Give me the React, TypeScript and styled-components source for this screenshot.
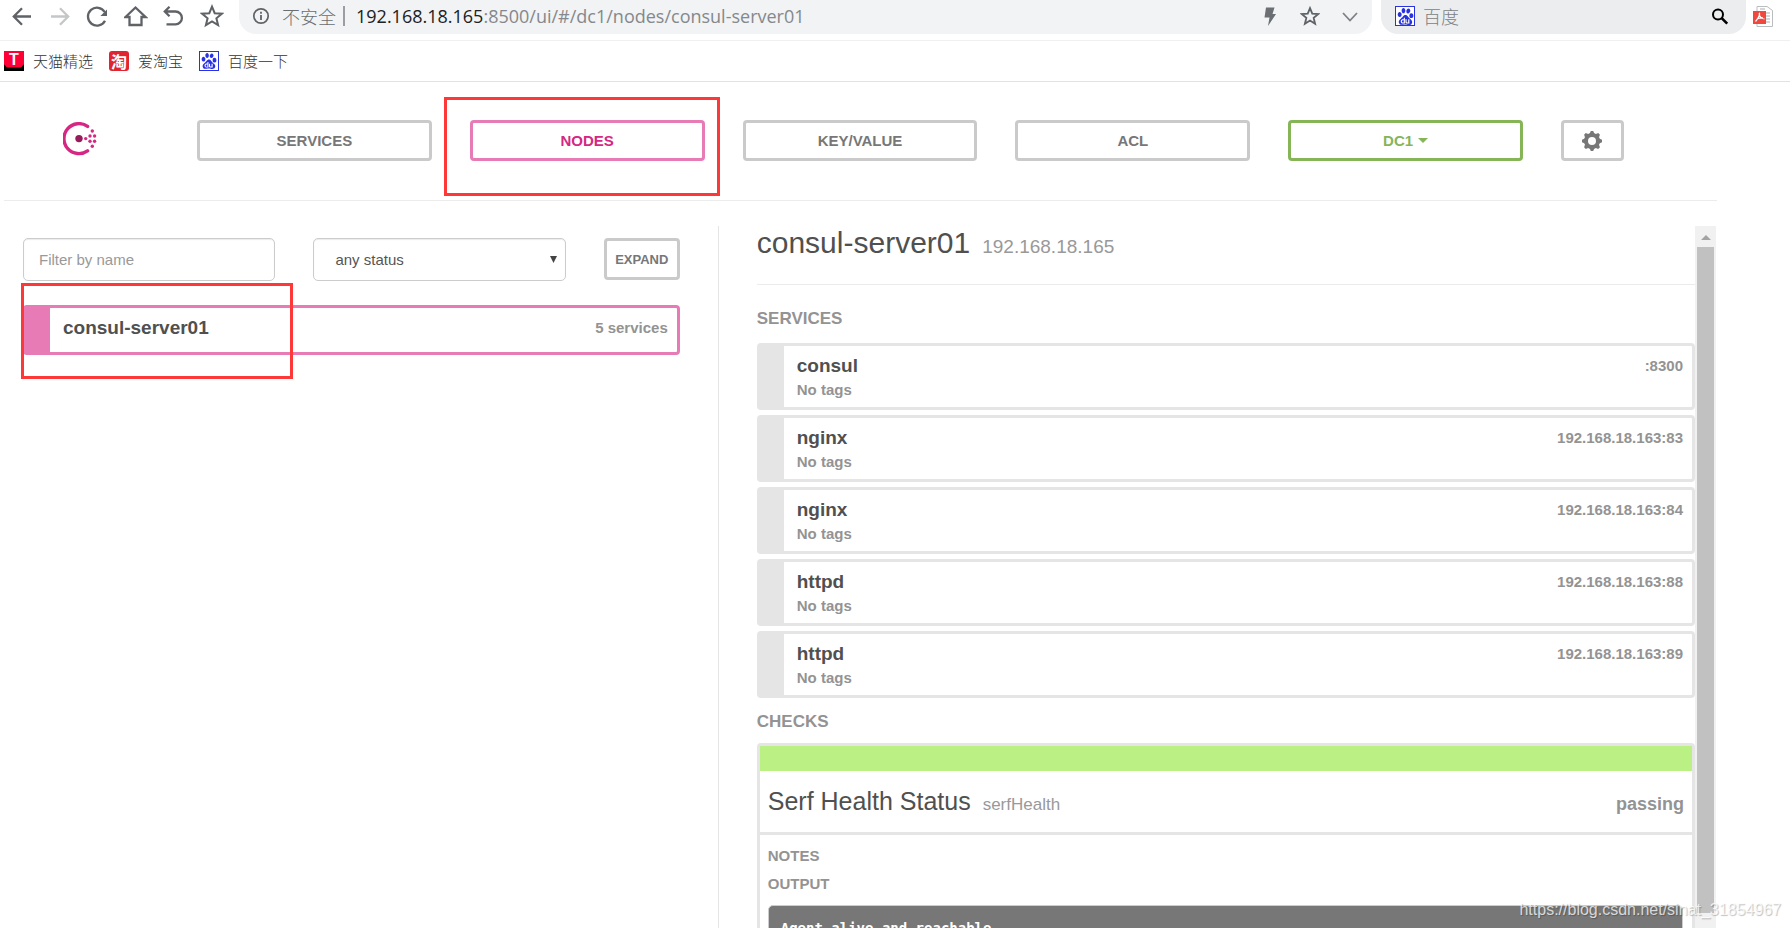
import React from "react";
import styled, { createGlobalStyle, css } from "styled-components";
import { SiBaidu } from "react-icons/si";

const GlobalStyle = createGlobalStyle`
  *, *::before, *::after { box-sizing: border-box; }
  body {
    margin: 0;
    background: #fff;
    color: #555;
    font-family: "Liberation Sans", Arial, sans-serif;
    font-size: 15px;
  }
  h1, h2, h3, h4, p, pre, ul { margin: 0; padding: 0; }
  button, input, select { font-family: inherit; }
`;

const Page = styled.div`
  position: relative;
  display: flex;
  flex-direction: column;
  height: 100vh;
  min-width: 1100px;
  overflow: hidden;
`;

/* ---------- browser chrome ---------- */

const Toolbar = styled.header`
  display: flex;
  align-items: flex-start;
  height: 41px;
  flex: none;
  padding: 0 14px 0 10px;
  border-bottom: 1px solid #f0f0f0;
`;

const ToolButtons = styled.div`
  display: flex;
  gap: 14px;
  padding-top: 4px;
  margin-right: 15px;
`;

const IconButton = styled.button`
  display: flex;
  align-items: center;
  justify-content: center;
  width: 24px;
  height: 24px;
  padding: 0;
  border: 0;
  background: none;
  color: #5f6266;
`;

const PdfLink = styled.a`
  display: flex;
  padding-top: 4px;
  width: 24px;
`;

const Pill = styled.div<{ $grow?: boolean }>`
  display: flex;
  align-items: center;
  height: 34px;
  border-radius: 0 0 17px 17px;
  background: ${(p) => (p.$grow ? "#f1f3f4" : "#ecedef")};
  ${(p) =>
    p.$grow
      ? css`
          flex: 1;
          padding: 0 10px 2px 12px;
          margin-right: 9px;
        `
      : css`
          width: 365px;
          padding: 0 14px 2px;
          margin-right: 6px;
        `}
`;

const PillActions = styled.div`
  display: flex;
  gap: 16px;
  margin-left: auto;
`;

const Insecure = styled.span`
  margin-left: 11px;
  padding-right: 7px;
  border-right: 2px solid #9a9da1;
  color: #6a6d71;
  font: 300 18px/20px "Noto Sans CJK SC", sans-serif;
`;

const Url = styled.span`
  margin-left: 11px;
  color: #85888c;
  font: 18px/24px "Open Sans", sans-serif;
  b { font-weight: 400; color: #202124; }
`;

const Engine = styled.span`
  margin-left: 8px;
  color: #7c7f83;
  font: 300 18px/24px "Noto Sans CJK SC", sans-serif;
`;

const Bookmarks = styled.nav`
  display: flex;
  align-items: center;
  gap: 16px;
  height: 41px;
  flex: none;
  padding: 0 4px;
  border-bottom: 1px solid #e2e2e2;
`;

const Bookmark = styled.a`
  display: flex;
  align-items: center;
  gap: 9px;
  color: #333;
  font: 300 15px/20px "Noto Sans CJK SC", sans-serif;
  text-decoration: none;
`;

const PawBox = styled.span`
  display: flex;
  align-items: center;
  justify-content: center;
  width: 20px;
  height: 20px;
  border: 1px solid #2932e1;
  background: #fff;
  color: #2932e1;
`;

const TaoBox = styled.span`
  display: flex;
  align-items: center;
  justify-content: center;
  width: 20px;
  height: 20px;
  border-radius: 3px;
  background: #e02430;
  color: #fff;
  font-size: 16px;
  font-weight: 700;
`;

/* ---------- consul page ---------- */

const Content = styled.div`
  display: flex;
  flex-direction: column;
  flex: 1;
  min-height: 0;
  padding: 0 73px 0 4px;
`;

const Nav = styled.nav`
  display: flex;
  gap: 38px;
  flex: none;
  padding: 38px 93px 39px 59px;
  border-bottom: 1px solid #ececec;
`;

const Logo = styled.a`
  display: flex;
  width: 96px;
  height: 34px;
  padding-top: 2px;
`;

const NavSlot = styled.div`
  position: relative;
  display: flex;
  flex: 1;
`;

type Tone = "plain" | "pink" | "green";
const tones: Record<Tone, { line: string; text: string }> = {
  plain: { line: "#cacaca", text: "#777" },
  pink: { line: "#e77bb5", text: "#d62783" },
  green: { line: "#86b558", text: "#86b558" },
};

const OutlineButton = styled.button<{ $tone?: Tone; $compact?: boolean }>`
  display: flex;
  align-items: center;
  justify-content: center;
  gap: 5px;
  flex: 1;
  height: 41px;
  padding: 0;
  border: 3px solid ${(p) => tones[p.$tone ?? "plain"].line};
  border-radius: 4px;
  background: #fff;
  color: ${(p) => tones[p.$tone ?? "plain"].text};
  font-size: 15px;
  font-weight: 700;
  ${(p) =>
    p.$compact &&
    css`
      height: 42px;
      font-size: 13px;
    `}
`;

const GearButton = styled(OutlineButton)`
  flex: none;
  width: 63px;
`;

const Highlight = styled.span<{ $around: "tab" | "node" }>`
  position: absolute;
  border: 3px solid #fd3838;
  pointer-events: none;
  ${(p) =>
    p.$around === "tab"
      ? css`inset: -23px -15px -35px -26px;`
      : css`
          top: -25px;
          left: -29px;
          width: 272px;
          height: 96px;
        `}
`;

const Columns = styled.main`
  display: grid;
  grid-template-columns: 5fr 7fr;
  flex: 1;
  min-height: 0;
  padding-top: 25px;
`;

const ListPane = styled.section`
  padding: 12px 38px 0 19px;
`;

const Filters = styled.form`
  display: grid;
  grid-template-columns: 1fr 1fr 76px;
  gap: 38px;
  margin-bottom: 24px;
`;

const field = css`
  width: 100%;
  height: 43px;
  border: 1px solid #ccc;
  border-radius: 5px;
  background: #fff;
  box-shadow: inset 0 1px 1px rgba(0, 0, 0, 0.08);
  color: #555;
  font-size: 15px;
`;

const NameInput = styled.input`
  ${field}
  min-width: 0;
  padding: 0 15px;
  &::placeholder { color: #999; opacity: 1; }
`;

const SelectWrap = styled.div`
  position: relative;
  svg { position: absolute; top: 18px; right: 9px; pointer-events: none; }
`;

const StatusSelect = styled.select`
  ${field}
  appearance: none;
  padding: 0 21px;
`;

const Row = styled.a<{ $active?: boolean }>`
  position: relative;
  display: flex;
  justify-content: space-between;
  min-height: ${(p) => (p.$active ? 50 : 67)}px;
  padding: 8px 9px 0 13px;
  border: 3px solid ${(p) => (p.$active ? "#e77bb5" : "#e5e5e5")};
  border-left-width: 27px;
  border-radius: 4px;
  color: #939393;
  font-weight: 700;
  line-height: 24px;
  text-decoration: none;
`;

const RowName = styled.h3`
  color: #505050;
  font-size: 19px;
  line-height: 24px;
`;

const DetailPane = styled.section`
  display: flex;
  min-width: 0;
  min-height: 0;
  padding-right: 1px;
  border-left: 1px solid #e5e5e5;
  overflow: hidden;
`;

const Detail = styled.div`
  flex: 1;
  min-width: 0;
  padding-left: 38px;
`;

const Title = styled.h1`
  padding-bottom: 24px;
  border-bottom: 1px solid #ebebeb;
  color: #505050;
  font-size: 30px;
  font-weight: 400;
  line-height: 34px;
`;

const Sub = styled.small<{ $size: number }>`
  margin-left: 12px;
  color: #999;
  font-size: ${(p) => p.$size}px;
  line-height: 1;
`;

const SectionTitle = styled.h2<{ $first?: boolean }>`
  margin: ${(p) => (p.$first ? "24px 0 14px" : "14px 0 11px")};
  color: #939393;
  font-size: 17px;
  line-height: 20px;
`;

const ServiceList = styled.div`
  display: flex;
  flex-direction: column;
  gap: 5px;
`;

const CheckCard = styled.article`
  border: 3px solid #e5e5e5;
  border-radius: 4px;
`;

const CheckBar = styled.div`
  height: 25px;
  background: #bbf085;
`;

const CheckHead = styled.div`
  display: flex;
  align-items: baseline;
  justify-content: space-between;
  padding: 15px 8px 16px;
  border-bottom: 3px solid #e5e5e5;
`;

const CheckName = styled.h3`
  color: #505050;
  font-size: 25px;
  font-weight: 400;
  line-height: 30px;
`;

const CheckState = styled.span`
  color: #939393;
  font-size: 18px;
  font-weight: 700;
  line-height: 1;
`;

const CheckBody = styled.div`
  padding: 7px 9px 12px 8px;
`;

const CheckLabel = styled.h4`
  color: #939393;
  font-size: 15px;
  line-height: 28px;
`;

const Output = styled.pre`
  margin-top: 7px;
  padding: 12px;
  border: 1px solid #ccc;
  border-radius: 5px;
  background: #777;
  color: #fff;
  font: 700 14px/20px "DejaVu Sans Mono", monospace;
`;

const ScrollTrack = styled.div`
  display: flex;
  flex-direction: column;
  align-items: center;
  width: 21px;
  padding: 9px 0 15px;
  background: #f1f1f1;
`;

const ScrollThumb = styled.div`
  flex: 1;
  width: 17px;
  margin-top: 7px;
  background: #c1c1c1;
`;

const Watermark = styled.span`
  position: absolute;
  right: 9px;
  bottom: 8px;
  color: rgba(255, 255, 255, 0.75);
  font-size: 16px;
  line-height: 20px;
  text-shadow: 1px 1px 1px rgba(0, 0, 0, 0.25);
`;

/* ---------- drawings ---------- */

type StrokeProps = { d: string; color?: string; width?: number; children?: React.ReactNode };
const Line = ({ d, color = "currentColor", width = 2.3, children }: StrokeProps) => (
  <svg width="24" height="24" viewBox="0 0 24 24" fill="none" stroke={color} strokeWidth={width} aria-hidden="true">
    <path d={d} />
    {children}
  </svg>
);

const STAR = "M12 2.6l2.7 6.6 7.1.5-5.4 4.6 1.7 6.9-6.1-3.8-6.1 3.8 1.7-6.9-5.4-4.6 7.1-.5z";

const TmallIcon = () => (
  <svg width="20" height="20" viewBox="0 0 20 20" aria-hidden="true">
    <rect width="20" height="20" fill="#ff0036" />
    <path d="M0 13.5c1.5 0 1.5 3 4 3h12c2.5 0 2.5-3 4-3V20H0z" fill="#000" />
    <text x="10" y="14" textAnchor="middle" fill="#fff" fontSize="16" fontWeight="700" fontFamily="Liberation Sans">T</text>
  </svg>
);

const PdfIcon = () => (
  <svg width="22" height="24" viewBox="0 0 22 24" aria-hidden="true">
    <path d="M5 2.5h10l5.500 4V22.500H5z" fill="#fff" stroke="#b9bdc0" />
    <path d="M14 9h4M14 12h4M14 15h4M14 18h4M8 5h5" stroke="#a9adb0" />
    <rect x="1" y="7" width="13" height="13" fill="#f0483e" />
    <path d="M7 9c1.300 0 .6 4-3.500 8.500M7 9.500c.5 3 2.500 5 5.500 5.500M5 15c2-1 4-1.300 6-1.200" fill="none" stroke="#fff" strokeWidth="1.200" />
  </svg>
);

const ConsulLogo = () => (
  <svg width="34" height="34" viewBox="0 0 34 34" aria-label="Consul">
    <path d="M24.600 4.400A15 15 0 1 0 24.600 28.900" fill="none" stroke="#d62783" strokeWidth="3.400" strokeLinecap="round" />
    <circle cx="16" cy="16.600" r="3.700" fill="#961d59" />
    <g fill="#d62783">
      <circle cx="22.700" cy="16.600" r="1.700" />
      <circle cx="27" cy="14" r="1.700" />
      <circle cx="27" cy="19.200" r="1.700" />
      <circle cx="31.600" cy="14" r="1.700" />
      <circle cx="31.600" cy="19.200" r="1.700" />
      <circle cx="29.300" cy="9" r="1.700" />
      <circle cx="29.300" cy="24.300" r="1.700" />
    </g>
  </svg>
);

const Gear = () => (
  <svg width="20" height="20" viewBox="0 0 20 20" aria-hidden="true">
    <g fill="#777">
      {[0, 45, 90, 135, 180, 225, 270, 315].map((a) => (
        <path key={a} d="M7 4L8.800 0h2.400L13 4z" transform={`rotate(${a} 10 10)`} />
      ))}
    </g>
    <circle cx="10" cy="10" r="6" fill="none" stroke="#777" strokeWidth="4" />
  </svg>
);

const Triangle = ({ up, w, h, color }: { up?: boolean; w: number; h: number; color: string }) => (
  <svg width={w} height={h} viewBox={`0 0 ${w} ${h}`} aria-hidden="true">
    <path d={up ? `M0 ${h}L${w / 2} 0L${w} ${h}z` : `M0 0H${w}L${w / 2} ${h}z`} fill={color} />
  </svg>
);

/* ---------- data ---------- */

const services = [
  { name: "consul", address: ":8300" },
  { name: "nginx", address: "192.168.18.163:83" },
  { name: "nginx", address: "192.168.18.163:84" },
  { name: "httpd", address: "192.168.18.163:88" },
  { name: "httpd", address: "192.168.18.163:89" },
];

export default function App() {
  return (
    <Page>
      <GlobalStyle />
      <Toolbar>
        <ToolButtons>
          <IconButton aria-label="Back"><Line d="M21 12.500H4M12 4.300L3.800 12.500l8.200 8.200" /></IconButton>
          <IconButton aria-label="Forward"><Line color="#c4c6c8" d="M3 12.500h17M12 4.300l8.200 8.200-8.200 8.200" /></IconButton>
          <IconButton aria-label="Reload">
            <Line d="M18.700 8A9 9 0 1 0 19 16.800"><path d="M21 5.500V12h-6.600z" fill="currentColor" stroke="none" /></Line>
          </IconButton>
          <IconButton aria-label="Home"><Line d="M1.500 13L11.500 3.500 21.500 13H17.500V21H5.500V13z" /></IconButton>
          <IconButton aria-label="Undo"><Line d="M3 7.500h10.500a6.400 6.400 0 0 1 0 12.800H4.500M7.500 2.800L2.800 7.500l4.700 4.700" /></IconButton>
          <IconButton aria-label="Favorites"><Line d={STAR} width={2} /></IconButton>
        </ToolButtons>
        <Pill $grow>
          <svg width="20" height="20" viewBox="0 0 20 20" aria-hidden="true">
            <circle cx="10" cy="10" r="7.200" fill="none" stroke="#5f6266" strokeWidth="1.700" />
            <path d="M10 9v5M10 5.800v1.900" stroke="#5f6266" strokeWidth="1.800" />
          </svg>
          <Insecure>不安全</Insecure>
          <Url><b>192.168.18.165</b>:8500/ui/#/dc1/nodes/consul-server01</Url>
          <PillActions>
            <IconButton aria-label="Speed mode">
              <svg width="24" height="24" viewBox="0 0 24 24" aria-hidden="true"><path d="M8 3.500h8.500L14.500 10H18L10 22l1.500-8.500H6.500z" fill="#6b6e72" /></svg>
            </IconButton>
            <IconButton aria-label="Bookmark this page">
              <svg width="20" height="20" viewBox="0 0 24 24" fill="none" stroke="#5f6266" strokeWidth="2.200" aria-hidden="true"><path d={STAR} /></svg>
            </IconButton>
            <IconButton aria-label="More"><Line d="M5 9l7 7.500L19 9" width={1.8} color="#7e8185" /></IconButton>
          </PillActions>
        </Pill>
        <Pill>
          <PawBox><SiBaidu size={17} /></PawBox>
          <Engine>百度</Engine>
          <PillActions>
            <IconButton aria-label="Search">
              <svg width="24" height="24" viewBox="0 0 24 24" fill="none" stroke="#000" strokeWidth="2" aria-hidden="true">
                <circle cx="10" cy="10.500" r="5" /><path d="M13.700 14.200l5.500 5.500" strokeWidth="2.600" />
              </svg>
            </IconButton>
          </PillActions>
        </Pill>
        <PdfLink href="#pdf" aria-label="PDF"><PdfIcon /></PdfLink>
      </Toolbar>
      <Bookmarks aria-label="Bookmarks">
        <Bookmark href="#tmall"><TmallIcon />天猫精选</Bookmark>
        <Bookmark href="#taobao"><TaoBox aria-hidden="true">淘</TaoBox>爱淘宝</Bookmark>
        <Bookmark href="#baidu"><PawBox><SiBaidu size={16} /></PawBox>百度一下</Bookmark>
      </Bookmarks>

      <Content>
        <Nav>
          <Logo href="#/"><ConsulLogo /></Logo>
          <NavSlot><OutlineButton>SERVICES</OutlineButton></NavSlot>
          <NavSlot>
            <OutlineButton $tone="pink">NODES</OutlineButton>
            <Highlight $around="tab" />
          </NavSlot>
          <NavSlot><OutlineButton>KEY/VALUE</OutlineButton></NavSlot>
          <NavSlot><OutlineButton>ACL</OutlineButton></NavSlot>
          <NavSlot>
            <OutlineButton $tone="green">DC1 <Triangle w={10} h={5} color="#86b558" /></OutlineButton>
          </NavSlot>
          <GearButton aria-label="Settings"><Gear /></GearButton>
        </Nav>

        <Columns>
          <ListPane>
            <Filters>
              <NameInput type="text" placeholder="Filter by name" aria-label="Filter by name" />
              <SelectWrap>
                <StatusSelect aria-label="Status" defaultValue="any">
                  <option value="any">any status</option>
                </StatusSelect>
                <Triangle w={7} h={7} color="#444" />
              </SelectWrap>
              <OutlineButton type="button" $compact>EXPAND</OutlineButton>
            </Filters>
            <Row href="#/dc1/nodes/consul-server01" $active>
              <RowName>consul-server01</RowName>
              <span>5 services</span>
              <Highlight $around="node" />
            </Row>
          </ListPane>

          <DetailPane>
            <Detail>
              <Title>consul-server01<Sub $size={19}>192.168.18.165</Sub></Title>
              <SectionTitle $first>SERVICES</SectionTitle>
              <ServiceList>
                {services.map((s, i) => (
                  <Row key={i} href={`#/dc1/services/${s.name}`}>
                    <div>
                      <RowName>{s.name}</RowName>
                      <p>No tags</p>
                    </div>
                    <span>{s.address}</span>
                  </Row>
                ))}
              </ServiceList>
              <SectionTitle>CHECKS</SectionTitle>
              <CheckCard>
                <CheckBar />
                <CheckHead>
                  <CheckName>Serf Health Status<Sub $size={17}>serfHealth</Sub></CheckName>
                  <CheckState>passing</CheckState>
                </CheckHead>
                <CheckBody>
                  <CheckLabel>NOTES</CheckLabel>
                  <CheckLabel>OUTPUT</CheckLabel>
                  <Output>Agent alive and reachable</Output>
                </CheckBody>
              </CheckCard>
            </Detail>
            <ScrollTrack aria-hidden="true">
              <Triangle up w={10} h={5} color="#a3a3a3" />
              <ScrollThumb />
            </ScrollTrack>
          </DetailPane>
        </Columns>
      </Content>
      <Watermark>https://blog.csdn.net/sinat_31854967</Watermark>
    </Page>
  );
}
